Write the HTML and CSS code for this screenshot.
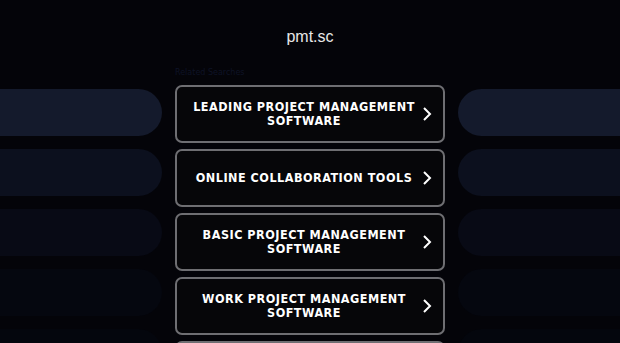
FILE: index.html
```html
<!DOCTYPE html>
<html lang="en">
<head>
    <meta charset="UTF-8">
    <meta name="viewport" content="width=device-width, initial-scale=1.0">
    <title>pmt.sc</title>
    <link rel="stylesheet" href="styles.css">
</head>
<body>

    <div class="header">
        <h1 class="domain">pmt.sc</h1>
    </div>

    <div class="layout">
        <div class="side side-left">
            <div class="pill p1"></div>
            <div class="pill p2"></div>
            <div class="pill p3"></div>
            <div class="pill p4"></div>
            <div class="pill p5"></div>
        </div>

        <div class="center">
            <div class="related">Related Searches</div>
            <a class="link-btn" href="#">
                <span class="link-text">LEADING PROJECT MANAGEMENT SOFTWARE</span>
                <svg class="chev" width="10" height="16" viewBox="0 0 10 16"><polyline points="2,2 8,8 2,14" fill="none" stroke="#fff" stroke-width="2"/></svg>
            </a>
            <a class="link-btn" href="#">
                <span class="link-text">ONLINE COLLABORATION TOOLS</span>
                <svg class="chev" width="10" height="16" viewBox="0 0 10 16"><polyline points="2,2 8,8 2,14" fill="none" stroke="#fff" stroke-width="2"/></svg>
            </a>
            <a class="link-btn" href="#">
                <span class="link-text">BASIC PROJECT MANAGEMENT SOFTWARE</span>
                <svg class="chev" width="10" height="16" viewBox="0 0 10 16"><polyline points="2,2 8,8 2,14" fill="none" stroke="#fff" stroke-width="2"/></svg>
            </a>
            <a class="link-btn" href="#">
                <span class="link-text">WORK PROJECT MANAGEMENT SOFTWARE</span>
                <svg class="chev" width="10" height="16" viewBox="0 0 10 16"><polyline points="2,2 8,8 2,14" fill="none" stroke="#fff" stroke-width="2"/></svg>
            </a>
            <a class="link-btn" href="#">
                <span class="link-text">PROJECT TRACKING SOFTWARE</span>
                <svg class="chev" width="10" height="16" viewBox="0 0 10 16"><polyline points="2,2 8,8 2,14" fill="none" stroke="#fff" stroke-width="2"/></svg>
            </a>
        </div>

        <div class="side side-right">
            <div class="pill p1"></div>
            <div class="pill p2"></div>
            <div class="pill p3"></div>
            <div class="pill p4"></div>
            <div class="pill p5"></div>
        </div>
    </div>

</body>
</html>
```

FILE: styles.css
```css
body {
    font-family: "DejaVu Sans", sans-serif;
    background-color: #040409;
    color: white;
    margin: 0;
    padding: 0;
    height: 343px;
    overflow: hidden;
}
.header {
    height: 64px;
    padding-top: 27px;
    box-sizing: border-box;
    text-align: center;
}
.domain {
    margin: 0;
    font-family: "Liberation Sans", Arial, sans-serif;
    font-size: 16px;
    font-weight: normal;
    color: #e8e8e8;
    line-height: 20px;
}
.layout {
    display: grid;
    grid-template-columns: 162px 270px 162px;
    column-gap: 13px;
}
.side {
    padding-top: 25px;
}
.pill {
    height: 47px;
    margin-bottom: 13px;
}
.side-left .pill {
    border-radius: 0 24px 24px 0;
}
.side-right .pill {
    border-radius: 24px 0 0 24px;
}
.p1 { background-color: #141a2c; }
.p2 { background-color: #0c101e; }
.p3 { background-color: #080a15; }
.p4 { background-color: #05070f; }
.p5 { background-color: #04060d; }
.related {
    font-size: 8px;
    color: #0e1326;
    height: 12px;
    line-height: 12px;
    margin-top: 3px;
    margin-bottom: 6px;
}
.link-btn {
    display: flex;
    align-items: center;
    height: 58px;
    box-sizing: border-box;
    border: 2px solid #6e6e72;
    border-radius: 7px;
    background-color: #060609;
    margin-bottom: 6px;
    padding: 0 11px 0 13px;
    color: white;
    text-decoration: none;
}
.link-text {
    flex: 1;
    text-align: center;
    font-family: "DejaVu Sans Condensed", "DejaVu Sans", sans-serif;
    font-stretch: condensed;
    font-size: 12.5px;
    font-weight: bold;
    letter-spacing: 0.5px;
    line-height: 14px;
}
.chev {
    margin-left: 4px;
}
```
